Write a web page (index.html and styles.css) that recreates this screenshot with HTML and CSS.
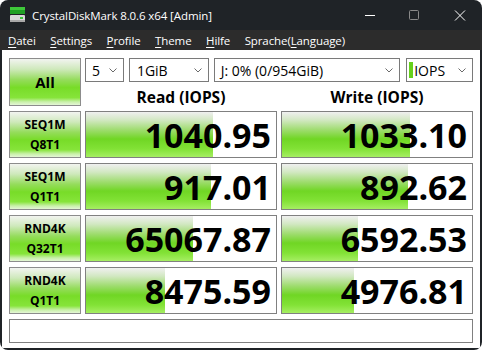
FILE: index.html
```html
<!DOCTYPE html>
<html lang="de">
<head>
    <meta charset="UTF-8">
    <title>CrystalDiskMark 8.0.6 x64 [Admin]</title>
    <link rel="stylesheet" href="styles.css">
</head>
<body>
    <div class="fenster">
        <header class="titelleiste">
            <svg class="appIcon" width="17" height="17" viewBox="0 0 17 17">
                <rect x="1" y="1" width="15" height="3" fill="#3ec83a"/>
                <rect x="1" y="4" width="15" height="4" fill="#20a024"/>
                <rect x="1" y="9" width="15" height="7" rx="1" fill="#d8d8d8"/>
                <rect x="1" y="14" width="15" height="2" fill="#a8a8a8"/>
                <rect x="11" y="11" width="3" height="2" fill="#3ec83a"/>
            </svg>
            <span class="titel">CrystalDiskMark 8.0.6 x64 [Admin]</span>
            <div class="steuerung">
                <svg width="46" height="30" viewBox="0 0 46 30"><line x1="21" y1="15.5" x2="31" y2="15.5" stroke="#fff" stroke-width="1"/></svg>
                <svg width="46" height="30" viewBox="0 0 46 30"><rect x="19.5" y="10.5" width="9" height="9" rx="1" fill="none" stroke="#8a8a8a" stroke-width="1"/></svg>
                <svg width="46" height="30" viewBox="0 0 46 30"><path d="M19 10.5 L29 20.5 M29 10.5 L19 20.5" stroke="#fff" stroke-width="1"/></svg>
            </div>
        </header>
        <nav class="menue">
            <span><u>D</u>atei</span>
            <span><u>S</u>ettings</span>
            <span><u>P</u>rofile</span>
            <span><u>T</u>heme</span>
            <span><u>H</u>ilfe</span>
            <span>Sprache(<u>L</u>anguage)</span>
        </nav>

        <main class="inhalt">
            <section class="kopf">
                <div class="knopf knopfAll">All</div>
                <div class="auswahl">
                    <div class="combo comboAnzahl"><span>5</span><svg class="pfeil" width="8" height="5" viewBox="0 0 8 5"><path d="M0.5 0.5 L4 4 L7.5 0.5" fill="none" stroke="#6a6a6a"/></svg></div>
                    <div class="combo comboGroesse"><span>1GiB</span><svg class="pfeil" width="8" height="5" viewBox="0 0 8 5"><path d="M0.5 0.5 L4 4 L7.5 0.5" fill="none" stroke="#6a6a6a"/></svg></div>
                    <div class="combo comboLaufwerk"><span>J: 0% (0/954GiB)</span><svg class="pfeil" width="8" height="5" viewBox="0 0 8 5"><path d="M0.5 0.5 L4 4 L7.5 0.5" fill="none" stroke="#6a6a6a"/></svg></div>
                    <div class="combo comboEinheit"><i class="gruenStrich"></i><span>IOPS</span><svg class="pfeil" width="8" height="5" viewBox="0 0 8 5"><path d="M0.5 0.5 L4 4 L7.5 0.5" fill="none" stroke="#6a6a6a"/></svg></div>
                </div>
                <div class="spalte">Read (IOPS)</div>
                <div class="spalte">Write (IOPS)</div>
            </section>

            <section class="ergebnisse">
                <div class="knopf knopfTest">SEQ1M<br>Q8T1</div>
                <div class="wert"><div class="balken" style="width: 127px"></div><span>1040.95</span></div>
                <div class="wert"><div class="balken" style="width: 128px"></div><span>1033.10</span></div>

                <div class="knopf knopfTest">SEQ1M<br>Q1T1</div>
                <div class="wert"><div class="balken" style="width: 125px"></div><span>917.01</span></div>
                <div class="wert"><div class="balken" style="width: 126px"></div><span>892.62</span></div>

                <div class="knopf knopfTest">RND4K<br>Q32T1</div>
                <div class="wert"><div class="balken" style="width: 107px"></div><span>65067.87</span></div>
                <div class="wert"><div class="balken" style="width: 76px"></div><span>6592.53</span></div>

                <div class="knopf knopfTest">RND4K<br>Q1T1</div>
                <div class="wert"><div class="balken" style="width: 79px"></div><span>8475.59</span></div>
                <div class="wert"><div class="balken" style="width: 72px"></div><span>4976.81</span></div>
            </section>

            <div class="kommentar"></div>
        </main>
    </div>
</body>
</html>
```

FILE: styles.css
```css
* {
    margin: 0;
    padding: 0;
    box-sizing: border-box;
}

body {
    background-color: #ffffff;
    font-family: "Open Sans", "Noto Sans", sans-serif;
}

.fenster {
    width: 482px;
    height: 350px;
    background-color: #1f2327;
    border-radius: 8px;
    overflow: hidden;
    display: flex;
    flex-direction: column;
}

.titelleiste {
    height: 30px;
    display: flex;
    align-items: center;
    color: #ffffff;
}

.appIcon {
    margin-left: 9px;
    margin-top: -1px;
}

.titel {
    margin-left: 6px;
    font-size: 11.5px;
    letter-spacing: -0.1px;
}

.steuerung {
    margin-left: auto;
    display: flex;
}

.steuerung svg {
    display: block;
}

.menue {
    height: 21px;
    background-color: #2c2c2c;
    display: flex;
    align-items: center;
    gap: 14.5px;
    padding-left: 8px;
    color: #ffffff;
    font-size: 11.5px;
    letter-spacing: -0.1px;
}

.menue u {
    text-underline-offset: 2px;
}

.inhalt {
    flex: 1;
    background-color: #ffffff;
    margin: 0 2px 2px 2px;
    padding: 8px 7px 5px 7px;
    display: flex;
    flex-direction: column;
    gap: 5px;
}

.kopf {
    display: grid;
    grid-template-columns: 72px 192px 192px;
    grid-template-rows: 24px 24px;
    column-gap: 4px;
}

.knopf {
    border: 1px solid #8c8c8c;
    background: linear-gradient(to bottom, #f2f4f0 0%, #cfe9bc 22%, #95dc5c 45%, #78dc28 62%, #86e43a 84%, #c8f0a8 93%, #e4f6d6 100%);
    color: #000000;
    font-weight: 700;
    display: flex;
    align-items: center;
    justify-content: center;
    text-align: center;
}

.knopfAll {
    grid-row: 1 / 3;
    font-size: 15px;
    height: 48px;
}

.auswahl {
    grid-column: 2 / 4;
    display: flex;
    gap: 5px;
}

.combo {
    height: 24px;
    border: 1px solid #7a7a7a;
    background-color: #ffffff;
    display: flex;
    align-items: center;
    padding-left: 6px;
    font-size: 14px;
    color: #000000;
    position: relative;
}

.pfeil {
    position: absolute;
    right: 6px;
    top: 9px;
}

.comboAnzahl {
    width: 39px;
}

.comboGroesse {
    width: 80px;
    padding-left: 7px;
}

.comboLaufwerk {
    width: 187px;
}

.comboEinheit {
    width: 67px;
    margin-left: 1px;
    padding-left: 2px;
}

.gruenStrich {
    width: 4px;
    height: 16px;
    background-color: #66d11c;
    margin-right: 1px;
}

.spalte {
    font-size: 15.5px;
    font-weight: 700;
    text-align: center;
    line-height: 20px;
    padding-top: 5px;
    white-space: nowrap;
}

.ergebnisse {
    display: grid;
    grid-template-columns: 72px 192px 192px;
    grid-auto-rows: 47px;
    column-gap: 4px;
    row-gap: 5px;
}

.knopfTest {
    font-size: 12px;
    line-height: 20px;
}

.wert {
    border: 1px solid #808080;
    background-color: #ffffff;
    position: relative;
    display: flex;
    align-items: center;
    justify-content: flex-end;
    padding-right: 5px;
}

.balken {
    position: absolute;
    left: 0;
    top: 0;
    bottom: 0;
    background: linear-gradient(to bottom, #f0f0f0 0%, #d2e8c2 18%, #9edc6e 40%, #70d624 60%, #82e236 82%, #a6ee62 100%);
}

.wert span {
    position: relative;
    font-size: 34px;
    font-weight: 700;
    color: #000000;
    line-height: 1;
}

.kommentar {
    height: 24px;
    border: 1px solid #808080;
    background-color: #ffffff;
}
```
